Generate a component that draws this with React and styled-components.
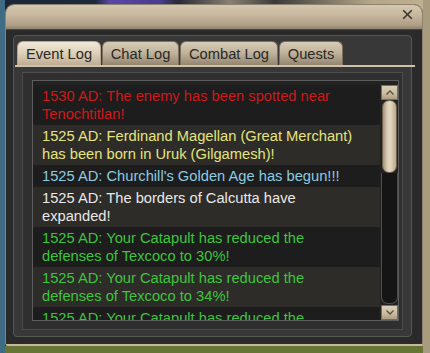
import React from "react";
import styled, { createGlobalStyle } from "styled-components";

const Global = createGlobalStyle`
  html, body {
    margin: 0;
    padding: 0;
    width: 430px;
    height: 353px;
    overflow: hidden;
  }
  body {
    font-family: "Liberation Sans", Arial, sans-serif;
    background:
      linear-gradient(90deg, #3f6c82 0 5px, transparent 5px),
      linear-gradient(90deg, transparent 423px, #a99b7d 423px),
      linear-gradient(180deg, transparent 346px, #667434 346px),
      linear-gradient(90deg, #1b2737 0, #1d2a3c 95px, #5a48a8 110px, #4a3c90 160px, #2a2a38 178px, #8a8070 230px, #3a3a3a 275px, #b5a686 370px, #c0b090 430px);
  }
  #root { width: 430px; height: 353px; }
`;

const Page = styled.div`
  box-sizing: border-box;
  width: 430px;
  height: 353px;
  padding: 4px 7px 7px 5px;
`;

const Window = styled.div`
  box-sizing: border-box;
  height: 100%;
  display: flex;
  flex-direction: column;
  border: 1px solid #8e8270;
  border-bottom: 2px solid #c6b89e;
  border-radius: 9px 9px 3px 3px;
  overflow: hidden;
  background: #2b2b2b;
`;

const TitleBar = styled.div`
  box-sizing: border-box;
  height: 25px;
  flex-shrink: 0;
  display: flex;
  justify-content: flex-end;
  align-items: flex-start;
  padding: 4px 9px 0 0;
  background: linear-gradient(180deg, #d6c8af 0%, #c4b59b 45%, #ad9e86 85%, #8e806c 100%);
  border-bottom: 1px solid #4e463a;
`;

const CloseButton = styled.div`
  width: 11px;
  height: 11px;
  display: flex;
  cursor: pointer;
`;

const Body = styled.div`
  flex: 1;
  min-height: 0;
  display: flex;
  padding: 5px 10px 7px 7px;
  background: #2a2a2a;
`;

const Panel = styled.div`
  flex: 1;
  min-height: 0;
  display: flex;
  flex-direction: column;
  border: 1px solid #565656;
  border-radius: 4px;
  background: #383838;
  padding-top: 5px;
`;

const TabRow = styled.div`
  display: flex;
  flex-shrink: 0;
  gap: 1px;
  margin: 0 -4px 0 1px;
  padding-left: 2px;
  border-bottom: 2px solid #cfc2aa;
`;

const Tab = styled.div`
  box-sizing: border-box;
  width: ${(p) => p.$w}px;
  height: 24px;
  display: flex;
  align-items: center;
  justify-content: center;
  border-radius: 6px 6px 0 0;
  font-size: 14.7px;
  color: #2a2824;
  background: ${(p) =>
    p.$active
      ? "linear-gradient(180deg, #f0e8d8 0%, #ded2bc 45%, #bfae94 100%)"
      : "linear-gradient(180deg, #d8ccb7 0%, #c2b49c 45%, #93856f 100%)"};
  border: 1px solid ${(p) => (p.$active ? "#b4a68e" : "#7e725f")};
  border-bottom: none;
`;

const ListFrame = styled.div`
  flex: 1;
  min-height: 0;
  display: flex;
  margin: 5px 8px 6px 8px;
  padding: 7px 3px 8px 9px;
  border: 1px solid #4c4c4c;
  background: #2f2f2f;
`;

const List = styled.div`
  flex: 1;
  min-height: 0;
  display: flex;
  gap: 1px;
  padding-top: 4px;
  border: 1px solid #5c5c5c;
  background: #222;
  overflow: hidden;
`;

const Rows = styled.div`
  flex: 1;
  min-height: 0;
  display: flex;
  flex-direction: column;
  overflow: hidden;
`;

const Row = styled.div`
  flex-shrink: 0;
  padding: 2px 20px 2px 9px;
  font-size: 14.7px;
  line-height: 18px;
  color: ${(p) => p.$color};
  background: ${(p) => (p.$alt ? "#2e2c29" : "#1d1d1d")};
`;

const Scrollbar = styled.div`
  width: 17px;
  flex-shrink: 0;
  display: flex;
  flex-direction: column;
`;

const ScrollButton = styled.div`
  box-sizing: border-box;
  height: 15px;
  flex-shrink: 0;
  display: flex;
  align-items: center;
  justify-content: center;
  border: 1px solid #7a6d58;
  background: linear-gradient(180deg, #ddd0b9 0%, #c9baa0 60%, #ad9d83 100%);
`;

const Thumb = styled.div`
  box-sizing: border-box;
  height: 73px;
  flex-shrink: 0;
  margin: 0 1px;
  border-radius: 7px;
  border: 1px solid #6c604d;
  background: linear-gradient(90deg, #a49276 0%, #dccfb6 35%, #e4d8c0 55%, #b8a78b 100%);
`;

const Track = styled.div`
  flex: 1;
  margin-bottom: 1px;
  border: 1px solid #4d4d4d;
  border-top: none;
  border-radius: 0 0 7px 7px;
  background: #151515;
`;

const Chevron = ({ up }) => (
  <svg width="8" height="5" viewBox="0 0 8 5">
    <polyline
      points={up ? "0.5,4.5 4,1 7.5,4.5" : "0.5,0.5 4,4 7.5,0.5"}
      fill="none"
      stroke="#5a4e3c"
      strokeWidth="1.3"
    />
  </svg>
);

const tabs = [
  { label: "Event Log", w: 84, active: true },
  { label: "Chat Log", w: 77 },
  { label: "Combat Log", w: 98 },
  { label: "Quests", w: 64 },
];

const RED = "#cc1a1c";
const YELLOW = "#e4e47e";
const CYAN = "#8ccbe0";
const WHITE = "#e8e8e8";
const GREEN = "#3ec43e";

const events = [
  { text: "1530 AD: The enemy has been spotted near Tenochtitlan!", color: RED },
  { text: "1525 AD: Ferdinand Magellan (Great Merchant) has been born in Uruk (Gilgamesh)!", color: YELLOW },
  { text: "1525 AD: Churchill's Golden Age has begun!!!", color: CYAN },
  { text: "1525 AD: The borders of Calcutta have expanded!", color: WHITE },
  { text: "1525 AD: Your Catapult has reduced the defenses of Texcoco to 30%!", color: GREEN },
  { text: "1525 AD: Your Catapult has reduced the defenses of Texcoco to 34%!", color: GREEN },
  { text: "1525 AD: Your Catapult has reduced the defenses of Texcoco to 38%!", color: GREEN },
];

export default function App() {
  return (
    <>
      <Global />
      <Page>
        <Window>
          <TitleBar>
            <CloseButton>
              <svg width="11" height="11" viewBox="0 0 11 11">
                <path d="M1.2 1.2 L9.8 9.8 M9.8 1.2 L1.2 9.8" stroke="#3a352e" strokeWidth="1.6" />
              </svg>
            </CloseButton>
          </TitleBar>
          <Body>
            <Panel>
              <TabRow>
                {tabs.map((t) => (
                  <Tab key={t.label} $w={t.w} $active={t.active}>
                    {t.label}
                  </Tab>
                ))}
              </TabRow>
              <ListFrame>
                <List>
                  <Rows>
                    {events.map((e, i) => (
                      <Row key={i} $color={e.color} $alt={i % 2 === 1}>
                        {e.text}
                      </Row>
                    ))}
                  </Rows>
                  <Scrollbar>
                    <ScrollButton>
                      <Chevron up />
                    </ScrollButton>
                    <Thumb />
                    <Track />
                    <ScrollButton>
                      <Chevron />
                    </ScrollButton>
                  </Scrollbar>
                </List>
              </ListFrame>
            </Panel>
          </Body>
        </Window>
      </Page>
    </>
  );
}
